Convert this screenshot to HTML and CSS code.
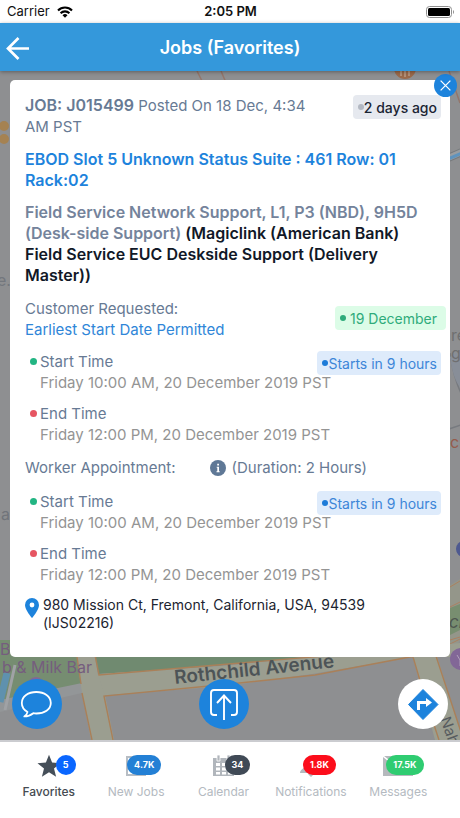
FILE: index.html
```html
<!DOCTYPE html>
<html lang="en">
<head>
<meta charset="utf-8">
<meta name="viewport" content="width=device-width, initial-scale=1">
<title>Jobs (Favorites)</title>
<link rel="stylesheet" href="styles.css">
</head>
<body>
<div class="status">
  <div class="status-left">
    <span>Carrier</span>
    <svg class="wifi" viewBox="0 0 16 12" aria-hidden="true"><g fill="none" stroke="#000" stroke-width="2.1"><path d="M1 4.4a10 10 0 0 1 14 0"/><path d="M3.6 7.2a6.2 6.2 0 0 1 8.8 0"/></g><path d="M8 11.8 5.5 9.2a3.6 3.6 0 0 1 5 0z"/></svg>
  </div>
  <strong class="clock">2:05 PM</strong>
  <svg class="battery" viewBox="0 0 28 12" aria-hidden="true"><rect x=".5" y=".5" width="25" height="11" rx="3" fill="#fff" stroke="#8f8f8f"/><rect x="2" y="2" width="22" height="8" rx="1.5"/><path d="M27 4v4q1-.6 1-2t-1-2z" fill="#8f8f8f"/></svg>
</div>

<header class="header">
  <button class="back" aria-label="Back"><svg viewBox="0 0 24 24"><path d="M23 13.500H2M12.500 3 2 13.500 12.500 24" fill="none" stroke="#fff" stroke-width="2.700"/></svg></button>
  <h1>Jobs (Favorites)</h1>
</header>

<main class="stage">
  <svg class="map" viewBox="0 71 460 669" preserveAspectRatio="xMidYMax slice" aria-hidden="true">
    <rect y="71" width="460" height="669" fill="#8e8f91"/>
    <g fill="none" stroke="#94766b" stroke-width="1.500"><path d="M197 71l7 14M221 71l6 14M449 71l11 32"/></g>
    <circle cx="405" cy="68" r="11" fill="#9b6a4b"/><path d="M401 71v5M405 71v6M409 71v5" stroke="#c9b5a4"/>
    <g fill="#a58252"><circle cx="4" cy="126" r="5"/><circle cx="4" cy="139" r="5"/></g>
    <path d="M448 158l14-6" stroke="#777a7d" stroke-width="8"/><path d="M448 158l14-6" stroke="#9a9da0" stroke-width="6"/><path d="M448 159l14-6" stroke="#5f93bd" stroke-width="3"/>
    <path d="M450 353q4 27 12 42M449 429l12-4" fill="none" stroke="#777a7f" stroke-width="1.500"/>
    <path d="M450 357q3 22 10 30V350z" fill="#888e98"/>
    <circle cx="464" cy="549" r="8" fill="#4e5990"/>
    <path d="M450 585l10-6v61l-10 20z" fill="#94968a"/><path d="M450 608l10-4v26l-10 5z" fill="#788e70"/>
    <path d="M450 587l10-6M450 607l10-5M450 640l10-3M450 644l10-5" stroke="#ab8060" fill="none"/>
    <g class="place"><text x="-3" y="286" fill="#73777d">e.</text><text x="1" y="520" fill="#70747a">a</text><text x="451" y="341" fill="#6f6f70">re</text><text x="451" y="359" fill="#6f6f70">g</text><text x="450" y="448" fill="#955b4b">ch</text></g>
    <path d="M0 640h78l6 46-84 24z" fill="#768d71"/>
    <path d="M94 650h290l-60 5-120 12-105 7z" fill="#708a70"/>
    <path d="M0 700l82-17v10L0 712z" fill="#939698"/>
    <path d="M98 674 220 666l80-8 160-15v14h-47l-18 3-83 14-86 12-118 9-24 2z" fill="#9b9e90"/>
    <path d="M76 650h18l4 25 7 20 9 45H91l-9-47z" fill="#9b9e90"/>
    <path d="M411 650h24l28 90h-28z" fill="#9b9e90"/>
    <g fill="none" stroke="#aa8059" stroke-width="1.400"><path d="M76 650l5 34M94 650l5 25 130-11 155-13M82 693l10 47M113 740l-9-44 126-12 85-9 100-19M411 650l10 34M434 650l28 85M421 685l18 55"/></g>
    <path d="M7 673 0 702" stroke="#5f91ae" stroke-width="7"/>
    <path d="M15 665 5 710" stroke="#a0a2a5" stroke-width="3"/>
    <g class="place"><text x="0" y="655" fill="#755d7e">Bu</text><text x="2" y="673" fill="#755d7e">b &amp; Milk Bar</text></g>
    <circle cx="36" cy="686" r="9" fill="#826797"/><circle cx="461" cy="659" r="11" fill="#826797"/>
    <path d="M457 655l3 5 4-5M460 660v6" fill="none" stroke="#b0a0bb"/>
    <text class="road" x="175" y="684" transform="rotate(-6 175 684)">Rothchild Avenue</text>
    <text class="side" x="440" y="719" transform="rotate(70 440 719)">Nah</text>
    <text class="street" x="449" y="628">ch</text>
  </svg>

  <article class="card">
    <button class="close" aria-label="Close"><svg viewBox="0 0 12 12"><path d="M1.500 1.500l9 9M10.500 1.500l-9 9" stroke="#fff" stroke-width="1.200"/></svg></button>
    <div class="row">
      <p class="posted"><b>JOB: J015499</b> Posted On 18 Dec, 4:34 AM PST</p>
      <span class="chip chip-gray"><i class="dot"></i>2 days ago</span>
    </div>
    <h2>EBOD Slot 5 Unknown Status Suite : 461 Row: 01 Rack:02</h2>
    <p class="service">Field Service Network Support, L1, P3 (NBD), 9H5D (Desk-side Support) <b>(Magiclink (American Bank) Field Service EUC Deskside Support (Delivery Master))</b></p>
    <div class="row requested">
      <p>Customer Requested:<br><span class="link">Earliest Start Date Permitted</span></p>
      <span class="chip chip-green"><i class="dot"></i>19 December</span>
    </div>
    <section class="times">
      <div class="time start"><div class="row"><h3>Start Time</h3><span class="chip chip-blue"><i class="dot"></i>Starts in 9 hours</span></div><p>Friday 10:00 AM, 20 December 2019 PST</p></div>
      <div class="time end"><h3>End Time</h3><p>Friday 12:00 PM, 20 December 2019 PST</p></div>
    </section>
    <div class="worker"><span>Worker Appointment:</span>
      <span class="duration"><svg viewBox="0 0 16 16" aria-hidden="true"><circle cx="8" cy="8" r="8" fill="#5f7896"/><path d="M7.200 3.800h1.800v1.700H7.200zM6.700 6.700H9v4.500h.7v1H6.500v-1h.8V7.700h-.6z" fill="#fff"/></svg>(Duration: 2 Hours)</span></div>
    <section class="times">
      <div class="time start"><div class="row"><h3>Start Time</h3><span class="chip chip-blue"><i class="dot"></i>Starts in 9 hours</span></div><p>Friday 10:00 AM, 20 December 2019 PST</p></div>
      <div class="time end"><h3>End Time</h3><p>Friday 12:00 PM, 20 December 2019 PST</p></div>
    </section>
    <div class="address">
      <svg viewBox="0 0 14 20" aria-hidden="true"><path d="M7 0a7 7 0 0 1 7 7c0 5-7 13-7 13S0 12 0 7a7 7 0 0 1 7-7z" fill="#1d83dc"/><circle cx="7" cy="7" r="2.400" fill="#fff"/></svg>
      <address>980 Mission Ct, Fremont, California, USA, 94539 (IJS02216)</address>
    </div>
  </article>

  <div class="actions">
    <button class="round" aria-label="Chat"><svg viewBox="0 0 50 50"><path d="M15.500 33C12 31 9.800 27.700 9.800 24c0-6.500 6.500-11 14.500-11s14.500 4.500 14.500 11-6.500 10.500-14.500 10.500c-1 0-2-.1-3-.3-2.500 2-5.500 3.200-9 3.200 2-1.300 3-2.800 3.200-4.400z" fill="none" stroke="#fff" stroke-width="1.800" stroke-linejoin="round"/></svg></button>
    <button class="round" aria-label="Share"><svg viewBox="0 0 50 50"><path d="M18 36h-3q-3 0-3-3V14q0-3 3-3h20q3 0 3 3v19q0 3-3 3h-3M25 41V17M18 24l7-7.500 7 7.500" fill="none" stroke="#fff" stroke-width="1.900"/></svg></button>
    <button class="round round-white" aria-label="Directions"><svg viewBox="0 0 50 50"><path d="M25 10.500 40 25.500 25 40.500 10.500 25.500z" fill="#1d83dc" stroke="#1d83dc" stroke-linejoin="round"/><path d="M20.500 31v-7.500h8" fill="none" stroke="#fff" stroke-width="3"/><path d="M28 19l6 4.500-6 4.500z" fill="#fff"/></svg></button>
  </div>
</main>

<nav class="tabs">
  <a class="tab active" href="#favorites"><span class="icon"><svg viewBox="0 0 24 24"><path d="M12 .8l3.100 7.800 8.400.6-6.500 5.300 2.100 8.200L12 18.200l-7.100 4.500L7 14.500.5 9.200l8.400-.6z" fill="#454f59"/></svg><span class="count c-blue">5</span></span>Favorites</a>
  <a class="tab" href="#new"><span class="icon"><svg viewBox="0 0 24 24"><path d="M3 3h18v18H3z" fill="none" stroke="#b7bdc4" stroke-width="2"/><path d="M3 20h18v2H3z" fill="#b7bdc4"/></svg><span class="count c-sky">4.7K</span></span>New Jobs</a>
  <a class="tab" href="#calendar"><span class="icon"><svg viewBox="0 0 24 24"><path d="M1 4h21v18H1z" fill="#b1b6bc"/><path d="M5 1h3v6H5zM15 1h3v6h-3z" fill="#b1b6bc" stroke="#fff" stroke-width=".8"/><path d="M4 9h4v3H4zM10 9h4v3h-4zM16 9h4v3h-4zM4 13.500h4v3H4zM10 13.500h4v3h-4zM16 13.500h4v3h-4zM4 18h4v2.500H4zM10 18h4v2.500h-4zM16 18h4v2.500h-4z" fill="#fff"/></svg><span class="count c-dark">34</span></span>Calendar</a>
  <a class="tab" href="#notifications"><span class="icon"><svg viewBox="0 0 24 24"><path d="M12 2q7 1 7 8t4 9H1q0-3 4-5V10q0-7 7-8zM9 20h6l-3 3z" fill="#b5b9be"/></svg><span class="count c-red">1.8K</span></span>Notifications</a>
  <a class="tab" href="#messages"><span class="icon"><svg class="mail" viewBox="0 0 30 24"><path d="M0 2h30v20H0z" fill="#b5b9bd"/><path d="M0 2l15 12L30 2" fill="none" stroke="#fff" stroke-width="1.500"/></svg><span class="count c-green">17.5K</span></span>Messages</a>
</nav>
</body>
</html>
```

FILE: styles.css
```css
* { box-sizing: border-box; margin: 0; padding: 0; }
body {
  min-height: 100vh;
  display: flex;
  flex-direction: column;
  font-family: Inter, "Liberation Sans", sans-serif;
  font-size: 15px;
  line-height: 21px;
  color: #677a94;
  background: #fff;
}
button { border: 0; background: none; cursor: pointer; }
svg { display: block; }

.status {
  display: grid;
  grid-template-columns: 1fr auto 1fr;
  align-items: center;
  height: 23px;
  padding: 0 6px 0 7px;
  font-size: 13px;
  color: #111;
}
.status-left { display: flex; align-items: center; gap: 7px; }
.wifi { width: 16px; height: 12px; }
.clock { font-weight: 600; }
.battery { width: 28px; height: 12px; justify-self: end; }

.header {
  position: relative;
  z-index: 1;
  display: grid;
  grid-template-columns: 36px 1fr 36px;
  align-items: center;
  height: 48px;
  background: #3498db;
  box-shadow: 0 1px 4px rgba(0, 0, 0, .35);
}
.back { display: flex; justify-content: center; }
.back svg { width: 24px; height: 24px; overflow: visible; }
.header h1 { text-align: center; font-size: 18px; font-weight: 600; color: #fff; }

.stage {
  position: relative;
  flex: 1;
  display: flex;
  flex-direction: column;
  justify-content: space-between;
  gap: 20px;
  padding: 9px 10px 11px;
}
.map { position: absolute; inset: 0; width: 100%; height: 100%; }
.place { font-size: 16px; }
.road { font-size: 19px; font-weight: 600; fill: #4d5457; }
.side { font-size: 15px; fill: #575c5f; }
.street { font-size: 17px; font-style: italic; fill: #4f5750; }

.card {
  position: relative;
  padding: 15px 9px 25px 15px;
  border-radius: 5px;
  background: #fff;
}
.close {
  position: absolute;
  top: -6px;
  right: -7px;
  width: 23px;
  height: 23px;
  border-radius: 50%;
  background: #1d83dc;
  display: flex;
  align-items: center;
  justify-content: center;
}
.close svg { width: 13px; height: 13px; }

.row { display: flex; justify-content: space-between; align-items: flex-start; gap: 16px; }
.posted b { font-size: 16px; font-weight: 600; }
.posted { max-width: 300px; }
h2 { margin-top: 12px; padding-right: 15px; font-size: 16px; font-weight: 600; line-height: 21px; color: #1d83dc; }
.service { margin-top: 11px; padding-right: 15px; font-size: 16px; font-weight: 600; color: #74839b; }
.service b { font-weight: 600; color: #111827; }
.requested { margin-top: 12px; }
.link { color: #2f86d8; }

.chip {
  flex: none;
  display: flex;
  align-items: center;
  height: 24px;
  padding: 0 4px 0 5px;
  border-radius: 4px;
  font-size: 14px;
}
.dot { width: 6px; height: 6px; border-radius: 50%; background: currentColor; }
.chip-gray { color: #1a2433; background: #e6e9ef; font-weight: 500; }
.chip-gray .dot { background: #b3b8c2; }
.chip-green { margin: 8px -5px 0 0; padding: 0 9px 0 5px; gap: 4px; color: #2fab7b; background: #dcfce7; }
.chip-blue { color: #3d86d8; background: #deebfb; }
.chip-blue .dot { background: #1d7bd8; }

.times { display: flex; flex-direction: column; gap: 10px; margin-top: 11px; }
.time { padding-left: 15px; }
.time .row { height: 21px; }
.time h3 { display: flex; align-items: center; gap: 3px; margin-left: -10px; font-size: 15px; font-weight: 400; }
.time h3::before { content: ""; width: 7px; height: 7px; border-radius: 50%; background: #22b583; }
.end h3::before { background: #e65562; }
.time p { color: #949494; }

.worker { display: flex; gap: 34px; margin: 12px 0 13px; }
.duration { display: flex; align-items: center; gap: 6px; }
.duration svg { width: 16px; height: 16px; }

.address { display: flex; gap: 4px; margin-top: 11px; }
.address svg { flex: none; width: 14px; height: 20px; margin-top: 2px; }
address { max-width: 340px; font-size: 14px; line-height: 18px; font-style: normal; color: #1c2430; }

.actions {
  position: relative;
  display: grid;
  grid-template-columns: 187fr 200fr auto;
  padding: 0 2px;
}
.round { width: 50px; height: 50px; border-radius: 50%; background: #1d83dc; }
.round svg { width: 50px; height: 50px; }
.round-white { background: #fff; }

.tabs {
  display: flex;
  height: 78px;
  padding: 12px 18px 0 5px;
  border-top: 2px solid #cbccd0;
  background: #fff;
}
.tab {
  flex: 1 1 0;
  display: flex;
  flex-direction: column;
  align-items: center;
  gap: 6px;
  font-size: 12px;
  line-height: 16px;
  color: #b4bac1;
  text-decoration: none;
}
.active { color: #454b52; font-weight: 500; }
.icon { position: relative; }
.icon svg { width: 24px; height: 24px; }
.icon .mail { width: 30px; }
.count {
  position: absolute;
  top: 1px;
  left: 19px;
  min-width: 20px;
  height: 20px;
  padding: 0 7px;
  border-radius: 10px;
  font-size: 9px;
  font-weight: 700;
  line-height: 20px;
  text-align: center;
  color: #fff;
}
.c-blue { background: #0a66ff; }
.c-sky { left: 3px; background: #2380d5; }
.c-dark { left: 13px; background: #404a56; }
.c-red { left: 4px; background: #fc0d1b; }
.c-green { left: 3px; background: #2fcc71; }
```
